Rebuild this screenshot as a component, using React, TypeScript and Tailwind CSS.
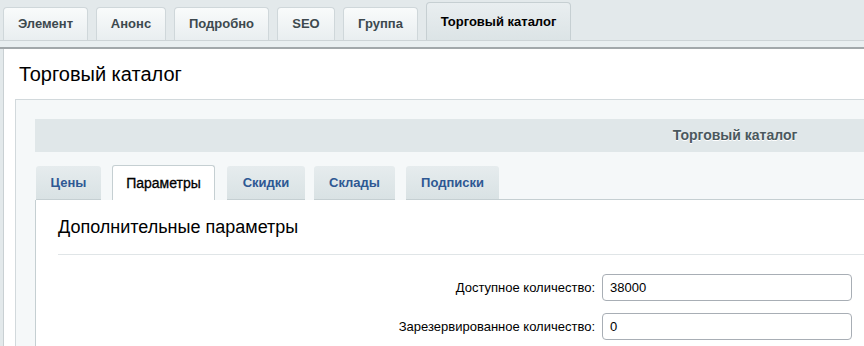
const topTabs = [
  { label: "Элемент", w: "w-[85px]" },
  { label: "Анонс", w: "w-[70px]" },
  { label: "Подробно", w: "w-[95px]" },
  { label: "SEO", w: "w-[58px]" },
  { label: "Группа", w: "w-[75px]" },
];

const subTabs = [
  { label: "Цены", cls: "w-[65px] ml-[1px]" },
  { label: "Скидки", cls: "w-[78px] ml-[12px]" },
  { label: "Склады", cls: "w-[81px] ml-[9px]" },
  { label: "Подписки", cls: "w-[93px] ml-[11px]" },
];

function SubTab({ label, cls }: { label: string; cls: string }) {
  return (
    <div
      className={`${cls} h-[34px] flex items-center justify-center rounded-t-[3px] bg-gradient-to-b from-[#e6ecee] to-[#d9e2e4] border-b border-[#c5cfd2] text-[13px] font-bold text-[#2e5893]`}
    >
      {label}
    </div>
  );
}

export default function App() {
  return (
    <div className="w-[864px] h-[346px] overflow-hidden bg-white font-['Liberation_Sans',Arial,sans-serif]">
      {/* top tabs */}
      <div className="h-[40px] bg-[#e3e9eb] flex items-end pl-[3px] gap-[8px]">
        {topTabs.map((t) => (
          <div
            key={t.label}
            className={`${t.w} h-[33px] flex items-center justify-center rounded-t-[4px] border border-b-0 border-[#cfd7da] bg-gradient-to-b from-[#f9fbfb] to-[#e9eef0] text-[13px] font-bold text-[#3d494e]`}
          >
            {t.label}
          </div>
        ))}
        <div className="w-[145px] h-[38px] flex items-center justify-center rounded-t-[4px] border border-b-0 border-[#c6cfd2] bg-gradient-to-b from-[#e9eef0] to-[#dce4e6] text-[13px] font-bold text-black">
          Торговый каталог
        </div>
      </div>
      <div className="h-[7px] bg-[#e9eff1] border-t border-[#cdd4d7]" />
      <div className="h-[2px] bg-[#a2a8ab]" />

      {/* body */}
      <div className="bg-[#e3e9eb] pl-[3px] h-[297px]">
        <div className="bg-white border-l border-[#c9d0d3] h-full">
          <div className="h-[50px] flex items-center pl-[15px] text-[20px] text-black">
            Торговый каталог
          </div>
          <div className="ml-[11px] w-[1452px] bg-[#f5f8f9] border border-[#d2d9dc] pt-[19px] px-[19px] h-[260px]">
            <div className="w-[1400px] h-[33px] bg-[#e0e7e9] flex items-center justify-center text-[14px] font-bold text-[#4a585e] [text-shadow:0_1px_0_#ffffff]">
              Торговый каталог
            </div>

            <div className="mt-[13px] flex items-end">
              <SubTab {...subTabs[0]} />
              <div className="ml-[11px] w-[103px] h-[35px] flex items-center justify-center rounded-t-[3px] bg-white border border-b-0 border-[#c5cfd2] text-[14px] text-black [-webkit-text-stroke:0.3px_#000]">
                Параметры
              </div>
              {subTabs.slice(1).map((t) => (
                <SubTab key={t.label} {...t} />
              ))}
              <div className="flex-1 border-b border-[#c5cfd2]" />
            </div>

            <div className="bg-white border-l border-[#c5cfd2] h-[200px] pl-[22px]">
              <div className="h-[55px] flex items-center text-[18px] text-black border-b border-[#e0e5e7]">
                Дополнительные параметры
              </div>
              <div className="pt-[19px] -ml-[22px] flex flex-col gap-[12px]">
                {[
                  ["Доступное количество:", "38000"],
                  ["Зарезервированное количество:", "0"],
                ].map(([label, value]) => (
                  <div key={label} className="flex items-center">
                    <div className="w-[559px] text-right text-[13px] text-black">{label}</div>
                    <div className="ml-[7px] w-[250px] h-[27px] rounded-[4px] border border-[#a8aeb5] flex items-center pl-[7px] text-[13px] text-black bg-white">
                      {value}
                    </div>
                  </div>
                ))}
              </div>
            </div>
          </div>
        </div>
      </div>
    </div>
  );
}
